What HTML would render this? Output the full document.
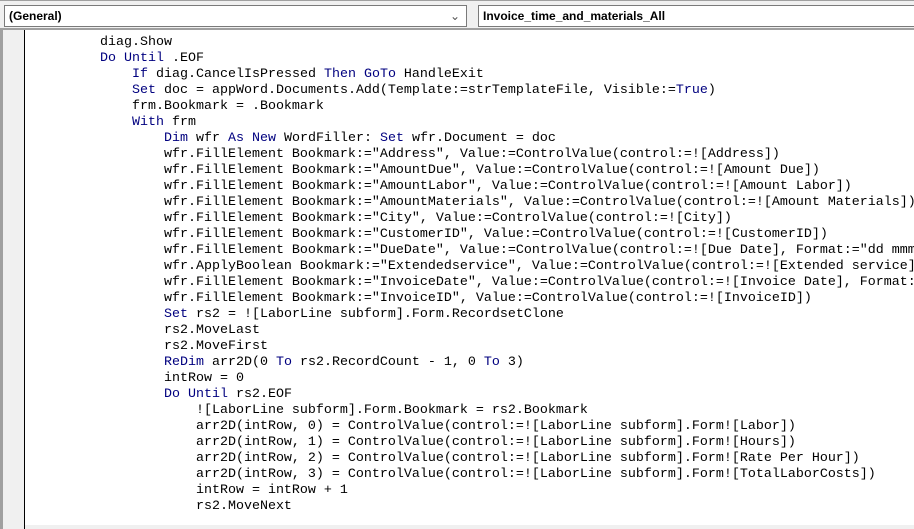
<!DOCTYPE html>
<html><head><style>
body{margin:0;width:914px;height:529px;overflow:hidden;background:#fff;position:relative;font-family:"Liberation Sans",sans-serif}
.top{position:absolute;left:0;top:0;width:914px;height:30px;background:#f0f0f0;border-top:1px solid #a0a0a0;border-bottom:2px solid #a0a0a0;box-sizing:border-box}
.cb{position:absolute;top:5px;height:22px;background:#fff;border:1px solid #7a7a7a;box-sizing:border-box;font-size:12px;font-weight:bold;line-height:20px;padding-left:4px}
.gut{position:absolute;left:0;top:30px;width:24px;height:499px;background:#f0f0f0;border-left:3px solid #a0a0a0;box-sizing:border-box}
.vl{position:absolute;left:24px;top:30px;width:1px;height:499px;background:#000}
.code{position:absolute;left:4px;top:35px;font-family:"Liberation Mono",monospace;font-size:13.33px;line-height:16px;white-space:pre;color:#000}
.k{color:#00007f}
.sb{position:absolute;left:25px;top:525px;width:889px;height:4px;background:#f0f0f0}
</style></head><body>
<div class="top"></div>
<div class="cb" style="left:4px;width:463px">(General)<span style="position:absolute;right:6px;top:0;font-weight:normal;color:#555">&#8964;</span></div>
<div class="cb" style="left:478px;width:440px">Invoice_time_and_materials_All</div>
<div class="gut"></div><div class="vl"></div>
<div class="code">            diag.Show
            <span class="k">Do Until</span> .EOF
                <span class="k">If</span> diag.CancelIsPressed <span class="k">Then GoTo</span> HandleExit
                <span class="k">Set</span> doc = appWord.Documents.Add(Template:=strTemplateFile, Visible:=<span class="k">True</span>)
                frm.Bookmark = .Bookmark
                <span class="k">With</span> frm
                    <span class="k">Dim</span> wfr <span class="k">As New</span> WordFiller: <span class="k">Set</span> wfr.Document = doc
                    wfr.FillElement Bookmark:="Address", Value:=ControlValue(control:=![Address])
                    wfr.FillElement Bookmark:="AmountDue", Value:=ControlValue(control:=![Amount Due])
                    wfr.FillElement Bookmark:="AmountLabor", Value:=ControlValue(control:=![Amount Labor])
                    wfr.FillElement Bookmark:="AmountMaterials", Value:=ControlValue(control:=![Amount Materials])
                    wfr.FillElement Bookmark:="City", Value:=ControlValue(control:=![City])
                    wfr.FillElement Bookmark:="CustomerID", Value:=ControlValue(control:=![CustomerID])
                    wfr.FillElement Bookmark:="DueDate", Value:=ControlValue(control:=![Due Date], Format:="dd mmm
                    wfr.ApplyBoolean Bookmark:="Extendedservice", Value:=ControlValue(control:=![Extended service]
                    wfr.FillElement Bookmark:="InvoiceDate", Value:=ControlValue(control:=![Invoice Date], Format:
                    wfr.FillElement Bookmark:="InvoiceID", Value:=ControlValue(control:=![InvoiceID])
                    <span class="k">Set</span> rs2 = ![LaborLine subform].Form.RecordsetClone
                    rs2.MoveLast
                    rs2.MoveFirst
                    <span class="k">ReDim</span> arr2D(0 <span class="k">To</span> rs2.RecordCount - 1, 0 <span class="k">To</span> 3)
                    intRow = 0
                    <span class="k">Do Until</span> rs2.EOF
                        ![LaborLine subform].Form.Bookmark = rs2.Bookmark
                        arr2D(intRow, 0) = ControlValue(control:=![LaborLine subform].Form![Labor])
                        arr2D(intRow, 1) = ControlValue(control:=![LaborLine subform].Form![Hours])
                        arr2D(intRow, 2) = ControlValue(control:=![LaborLine subform].Form![Rate Per Hour])
                        arr2D(intRow, 3) = ControlValue(control:=![LaborLine subform].Form![TotalLaborCosts])
                        intRow = intRow + 1
                        rs2.MoveNext</div>
<div class="sb"></div>
</body></html>
